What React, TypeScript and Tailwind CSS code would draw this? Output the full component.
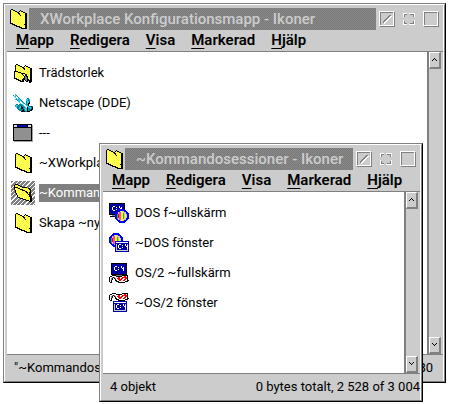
import type { ReactNode } from "react";

const palette: Record<string, string> = {
  k: "#000000",
  y: "#ffff00",
  c: "#ffffa0",
  w: "#ffffff",
  g: "#808080",
  l: "#c8c8c8",
  t: "#008898",
  a: "#30c8e8",
  r: "#ff0000",
};

function PixelArt({ rows }: { rows: string[] }) {
  const width = Math.max(...rows.map((row) => row.length));
  return (
    <svg width={width} height={rows.length} shapeRendering="crispEdges" aria-hidden="true" className="shrink-0">
      <Pixels rows={rows} />
    </svg>
  );
}

function Pixels({ rows }: { rows: string[] }) {
  return rows.flatMap((row, y) =>
    [...row].map((code, x) =>
      palette[code] ? <rect key={`${x}-${y}`} x={x} y={y} width={1} height={1} fill={palette[code]} /> : null,
    ),
  );
}

const folderRows = [
  ".kk..............",
  "kyykk.....k......",
  "kycyykk..kykk....",
  "kcycycykkycyykk..",
  "kycycycykkycycykk",
  "kcycycycykycycykk",
  "kycycycycykycyckk",
  "kcycycycycycycykk",
  "kycycycycycycyckk",
  "kcycycycycycycykk",
  "kycycycycycycyckk",
  "kcycycycycycycykk",
  "kycycycycycycyckk",
  "kcycycycycycycykk",
  "kkkcycycycycyyckk",
  "..kkkycycycycykkk",
  "....kkkycycycyckk",
  "......kkkkycycykk",
  ".........kkkcyckk",
  "...........kkkkkk",
];

const openFolderRows = [
  ".kkk..............",
  "kyyykk............",
  "kycycykk..........",
  "kkkkcycykkkkk.....",
  "kcyykkcycycyyykk..",
  "kycycykkkycycyykk.",
  ".kcycycykkkycycyk.",
  ".kycycycycykkcyyk.",
  ".kcycycycycykkykk.",
  "..kcycycycycykykk.",
  "..kycycycycycykkk.",
  "...kcycycycycyckk.",
  "...kycycycycycykkk",
  "....kkycycycycyckk",
  "......kkkcycycyykk",
  ".........kkkycyckk",
  "............kkkykk",
  "...............kkk",
];

const settingsRows = [
  "..kk..............",
  ".kyykk.....k......",
  ".kycyykk..kykk....",
  ".kcycycykkycyykk..",
  ".kycycycykkycycykk",
  ".kcycycycykycycykk",
  ".kycycycycycycyckk",
  "kkkkcycycycycycykk",
  "kyyykkkycycycyyckk",
  "kcycyyykkkkycycykk",
  "kycycycykyykkyyckk",
  "kcycycycykckkcyckk",
  "kycycycycykgkkyckk",
  "kcycycycyckggkcykk",
  "kkkcycycykkggkyckk",
  "..kkkyyckkkggkkykk",
  "....kkkykk.kgkkkkk",
  "......kkkk..kk.kkk",
  "...............kk.",
];

const netscapeRows = [
  "..a.................",
  "t.at................",
  ".aawt...............",
  "..awwt..............",
  "...awat.......tt....",
  "..ataaat.....aata...",
  "....taaat....aatt...",
  ".....aawat...taat...",
  "......awwat..taak...",
  ".......awwat.takk...",
  "...tt.tttawwattk....",
  "..taatttttawwaak....",
  "..aatttakttawwaattkt",
  "...attaakkttawkaaatk",
  "....ttatkktaaakttatk",
  ".....tttttktaaktttkk",
  "......tttkktaakttkk.",
  "........kkkkttkkk...",
];

const ribbonRows = [
  "...kkkk......kkkkkk.",
  ".kkwwwwkkkkkkwwrrwk.",
  "kwwgkgwwwrrwwrrrrrk.",
  "kwgk.kgwrrrwrrwwrrk.",
  "kwgk..kwwrrrrwwrrwk.",
  "kwk...kkwwrrwwrrwwkk",
  "kwk....kkkwwwwwwkkk.",
  ".kk......kkkkkkk....",
];

const promptRows = [
  ".ww....w...",
  "w...w..w.w.",
  "w.......ww.",
  "w...w....w.",
  ".ww......w.",
];

function Prompt({ x, y }: { x: number; y: number }) {
  return (
    <g transform={`translate(${x} ${y})`}>
      <Pixels rows={promptRows} />
    </g>
  );
}

function Disc({ x, y }: { x: number; y: number }) {
  return (
    <g transform={`translate(${x} ${y})`}>
      <circle cx="7" cy="7" r="6" fill="#c8c8c8" stroke="#0000ff" strokeWidth="2" />
      <path d="M4 3h2v8H4z" fill="#ff40d0" />
      <path d="M6 2h2v10H6z" fill="#ffff00" />
      <path d="M8 4h1v6H8zM2 5h1v5H2z" fill="#00d020" />
      <path d="M3 5h1v4H3z" fill="#ff0000" />
      <path d="M10 5h1v4h-1z" fill="#ffff00" />
    </g>
  );
}

function FullScreen({ x, y }: { x: number; y: number }) {
  return (
    <g transform={`translate(${x} ${y})`}>
      <rect width="16" height="12" fill="#000" />
      <rect x="1" y="1" width="14" height="10" fill="#0000a8" />
      <Prompt x={3} y={3} />
      <path d="M3 12h10v1H3z" fill="#808080" />
      <path d="M1 13h13v1H1z" fill="#000" />
    </g>
  );
}

function SmallWindow({ x, y }: { x: number; y: number }) {
  return (
    <g transform={`translate(${x} ${y})`}>
      <rect width="14" height="11" fill="#0000a8" />
      <rect x="1" y="1" width="12" height="1" fill="#fff" />
      <path d="M1 3h1v7H1zM12 3h1v7h-1zM1 9h12v1H1z" fill="#c8c8c8" />
      <Prompt x={3} y={3} />
    </g>
  );
}

function SessionIcon({ children }: { children: ReactNode }) {
  return (
    <svg width="20" height="20" shapeRendering="crispEdges" aria-hidden="true" className="shrink-0">
      {children}
    </svg>
  );
}

function ProgramIcon() {
  return (
    <svg width="20" height="18" shapeRendering="crispEdges" aria-hidden="true">
      <rect x="1" y="1" width="19" height="17" fill="#a0a0a0" />
      <rect width="19" height="17" fill="#000" />
      <rect x="1" y="1" width="3" height="2" fill="#d8d8d8" />
      <rect x="4" y="1" width="10" height="2" fill="#0000a8" />
      <rect x="15" y="1" width="3" height="2" fill="#d8d8d8" />
      <rect x="1" y="4" width="17" height="12" fill="#909090" />
    </svg>
  );
}

type Item = { label: string; icon: ReactNode; selected?: boolean };

const settingsItems: Item[] = [
  { label: "Trädstorlek", icon: <PixelArt rows={settingsRows} /> },
  { label: "Netscape (DDE)", icon: <PixelArt rows={netscapeRows} /> },
  { label: "---", icon: <ProgramIcon /> },
  { label: "~XWorkplace", icon: <PixelArt rows={folderRows} /> },
  { label: "~Kommandosessioner", icon: <PixelArt rows={openFolderRows} />, selected: true },
  { label: "Skapa ~ny", icon: <PixelArt rows={folderRows} /> },
];

const sessionItems: Item[] = [
  {
    label: "DOS f~ullskärm",
    icon: (
      <SessionIcon>
        <FullScreen x={0} y={0} />
        <Disc x={6} y={6} />
      </SessionIcon>
    ),
  },
  {
    label: "~DOS fönster",
    icon: (
      <SessionIcon>
        <Disc x={0} y={0} />
        <SmallWindow x={6} y={8} />
      </SessionIcon>
    ),
  },
  {
    label: "OS/2 ~fullskärm",
    icon: (
      <SessionIcon>
        <FullScreen x={2} y={0} />
        <g transform="translate(0 12)">
          <Pixels rows={ribbonRows} />
        </g>
      </SessionIcon>
    ),
  },
  {
    label: "~OS/2 fönster",
    icon: (
      <SessionIcon>
        <Pixels rows={ribbonRows} />
        <SmallWindow x={4} y={8} />
      </SessionIcon>
    ),
  },
];

function TitleButton({ label, children }: { label: string; children: ReactNode }) {
  return (
    <button type="button" aria-label={label} className="size-4">
      <svg width="16" height="16" shapeRendering="crispEdges" fill="none">
        {children}
      </svg>
    </button>
  );
}

function RaisedFrame() {
  return (
    <>
      <path d="M.5 15V.5H15M1 14.500h13.500V1" stroke="#fff" />
      <path d="M1 15.500h14.500V1M1.500 14V1.500H14" stroke="#808080" />
    </>
  );
}

function ScrollButton({ label, d }: { label: string; d: string }) {
  return (
    <button
      type="button"
      aria-label={label}
      className="flex h-[17px] w-full items-center justify-center border-t border-r-2 border-b-2 border-l border-t-white border-r-[#808080] border-b-[#808080] border-l-white bg-[#cccccc]"
    >
      <svg width="5" height="4" shapeRendering="crispEdges" aria-hidden="true">
        <path d={d} fill="#000" />
      </svg>
    </button>
  );
}

type WindowProps = {
  title: string;
  items: Item[];
  statusLeft: string;
  statusRight: string;
  className: string;
  statusClass: string;
};

function FolderWindow({ title, items, statusLeft, statusRight, className, statusClass }: WindowProps) {
  return (
    <section
      aria-label={title}
      className={`absolute flex flex-col overflow-hidden border border-t-[#808080] border-r-black border-b-black border-l-[#808080] bg-[#cccccc] ${className}`}
    >
      <div className="flex min-h-0 flex-1 flex-col border border-t-white border-r-[#808080] border-b-[#808080] border-l-white">
        <div className="flex min-h-0 flex-1 flex-col border-r border-white pt-[3px] pl-0.5">
          <header className="flex h-[22px] shrink-0 items-center pr-1">
            <div className="flex w-[22px] shrink-0 justify-center">
              <PixelArt rows={folderRows} />
            </div>
            <h1 className="mr-[3px] h-full min-w-0 flex-1 overflow-hidden bg-[repeating-conic-gradient(#787878_0_25%,#8a8a8a_0_50%)] bg-size-[2px_2px] pl-[11px] text-[15px] leading-[22px] font-medium whitespace-nowrap text-[#cccccc]">
              {title}
            </h1>
            <div className="flex gap-1.5">
              <TitleButton label="Dölj">
                <RaisedFrame />
                <path d="M4 11.500 11.500 4" stroke="#808080" />
                <path d="M5 12.500 12.500 5" stroke="#fff" strokeWidth="1.500" />
              </TitleButton>
              <TitleButton label="Minimera">
                <path d="M2.500 6V2.500H6M8 2.500h5.500V6M2.500 9v4.500H6M8 13.500h5.500V9" stroke="#fff" />
                <path d="M3.500 6V3.500H6M9 3.500h3.500V6M3.500 10v2.500H6M9 12.500h3.500V10" stroke="#808080" />
              </TitleButton>
              <TitleButton label="Maximera">
                <RaisedFrame />
              </TitleButton>
            </div>
          </header>
          <nav className="flex h-[22px] shrink-0 gap-4 border-b border-[#808080] pl-[9px] text-[15px] leading-5 font-semibold">
            {["Mapp", "Redigera", "Visa", "Markerad", "Hjälp"].map((name) => (
              <button key={name} type="button" className="h-5">
                <span className="underline decoration-1 underline-offset-3">{name[0]}</span>
                {name.slice(1)}
              </button>
            ))}
          </nav>
          <div className="mr-0.5 flex min-h-0 flex-1 bg-white">
            <ul className="min-w-0 flex-1 overflow-hidden pt-1.5 pl-1">
              {items.map((item) => (
                <li key={item.label} className="flex h-[30px] items-center gap-1">
                  <div
                    className={`flex size-6 shrink-0 items-center justify-center ${
                      item.selected ? "bg-[repeating-linear-gradient(135deg,#808080_0_2px,#ffffff_2px_3px)]" : ""
                    }`}
                  >
                    {item.icon}
                  </div>
                  <span
                    className={`h-[18px] text-[13px] leading-[18px] whitespace-nowrap ${
                      item.selected ? "bg-[#808080] text-white" : ""
                    }`}
                  >
                    {item.label}
                  </span>
                </li>
              ))}
            </ul>
            <div className="flex w-3.5 shrink-0 flex-col justify-between border-l-2 border-[#808080] bg-[#cccccc]">
              <ScrollButton label="Rulla upp" d="M2 0h1v1h1v1h1v1H4V2H3V1H2v1H1v1H0V2h1V1h1z" />
              <ScrollButton label="Rulla ned" d="M0 0h1v1h1v1h1V1h1V0h1v1H4v1H3v1H2V2H1V1H0z" />
            </div>
          </div>
          <footer
            className={`flex h-[27px] shrink-0 justify-between border-t border-[#808080] pl-[7px] text-[13px] leading-[25px] whitespace-nowrap ${statusClass}`}
          >
            <span>{statusLeft}</span>
            <span>{statusRight}</span>
          </footer>
        </div>
      </div>
    </section>
  );
}

export default function App() {
  return (
    <main className="relative h-screen overflow-hidden bg-white font-['Roboto','Noto_Sans',sans-serif] text-black">
      <FolderWindow
        title="XWorkplace Konfigurationsmapp - Ikoner"
        items={settingsItems}
        statusLeft={'"~Kommandosessioner"'}
        statusRight="80"
        className="top-[3px] right-[3px] bottom-[21px] left-[3px]"
        statusClass="pr-2.5"
      />
      <FolderWindow
        title="~Kommandosessioner - Ikoner"
        items={sessionItems}
        statusLeft="4 objekt"
        statusRight="0 bytes totalt, 2 528 of 3 004"
        className="top-[143px] right-[26px] bottom-0.5 left-[99px]"
        statusClass="pr-0"
      />
    </main>
  );
}
